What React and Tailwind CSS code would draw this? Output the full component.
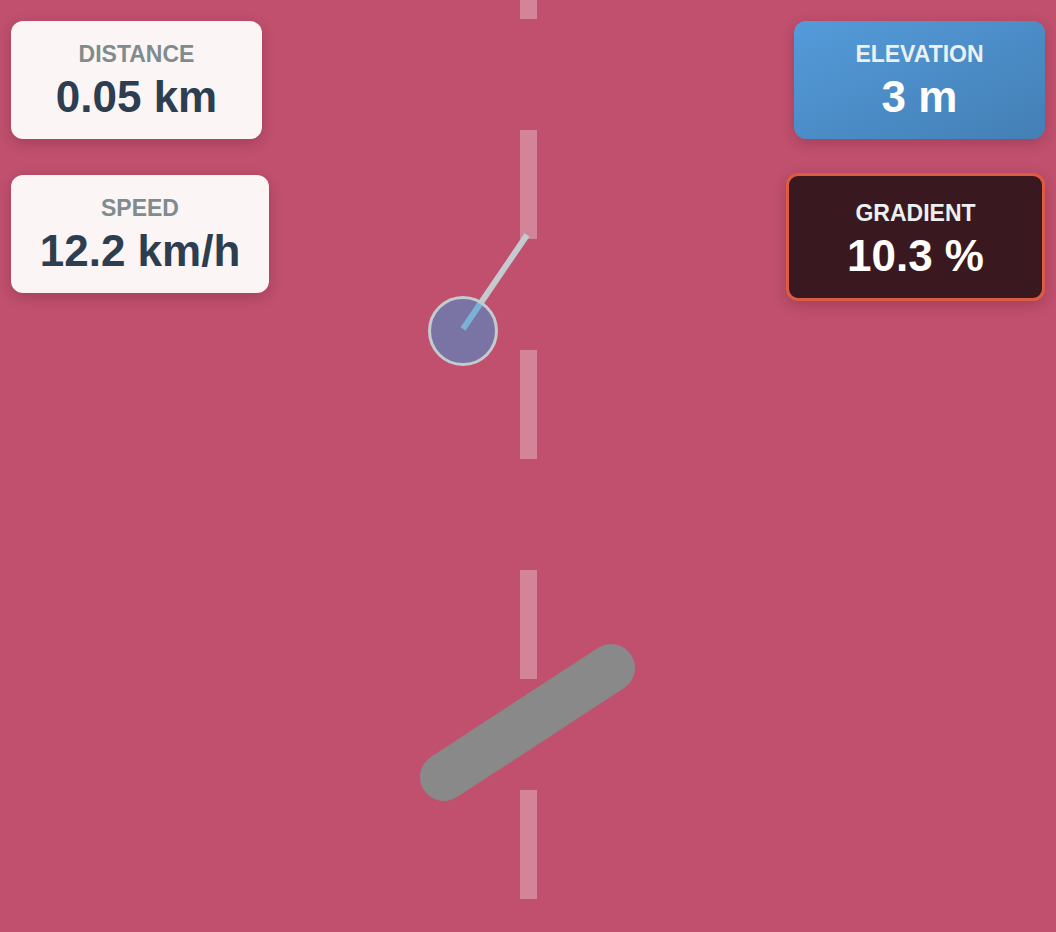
import React from 'react';

const font = { fontFamily: '"Liberation Sans", Arial, Helvetica, sans-serif' };

// Little stat card used in the four corners of the ride view
function StatCard({ label, value, className, labelClass, valueClass }) {
  return (
    <div className={`flex flex-col items-center rounded-xl shadow-[0_4px_14px_rgba(60,0,20,0.22)] ${className}`}>
      <div className={`text-[23px] font-bold leading-[28px] ${labelClass}`}>{label}</div>
      <div className={`mt-[2px] text-[44px] font-bold leading-[53px] ${valueClass}`}>{value}</div>
    </div>
  );
}

function Road() {
  const dashes = [-90, 130, 350, 570, 790];
  return (
    <svg className="absolute inset-0" width="1056" height="932" viewBox="0 0 1056 932">
      {dashes.map((y) => (
        <rect key={y} x="520" y={y} width="17" height="109" fill="#ffffff" fillOpacity="0.3" />
      ))}
      {/* rider marker + heading */}
      <line x1="463" y1="329" x2="527" y2="235" stroke="#c3cbcf" strokeWidth="6" />
      <circle cx="463" cy="331" r="33.5" fill="rgba(52,152,219,0.5)" stroke="#c3cbcf" strokeWidth="3" />
      {/* obstacle */}
      <line x1="444" y1="777" x2="611" y2="668" stroke="#898989" strokeWidth="48" strokeLinecap="round" />
    </svg>
  );
}

export default function App() {
  return (
    <div className="relative h-[932px] w-full overflow-hidden bg-[#c0506e]" style={font}>
      <Road />
      <div className="absolute inset-0 flex justify-between px-[11px] pt-[21px]">
        <div className="flex flex-col items-start gap-9">
          <StatCard
            label="DISTANCE"
            value="0.05 km"
            className="h-[118px] w-[251px] bg-[#fcf5f5] pt-[19px]"
            labelClass="text-[#7f8c8d]"
            valueClass="text-[#2c3e50]"
          />
          <StatCard
            label="SPEED"
            value="12.2 km/h"
            className="h-[118px] w-[258px] bg-[#fcf5f5] pt-[19px]"
            labelClass="text-[#7f8c8d]"
            valueClass="text-[#2c3e50]"
          />
        </div>
        <div className="flex flex-col items-end gap-[34px]">
          <StatCard
            label="ELEVATION"
            value="3 m"
            className="h-[118px] w-[251px] bg-gradient-to-br from-[#549bda] to-[#437fb5] pt-[19px]"
            labelClass="text-[#ecf0f1]"
            valueClass="text-white"
          />
          <StatCard
            label="GRADIENT"
            value="10.3 %"
            className="h-[128px] w-[259px] border-[3px] border-[#dc5b42] bg-[#3a1820] pt-[23px]"
            labelClass="text-[#ecf0f1]"
            valueClass="text-white"
          />
        </div>
      </div>
    </div>
  );
}
